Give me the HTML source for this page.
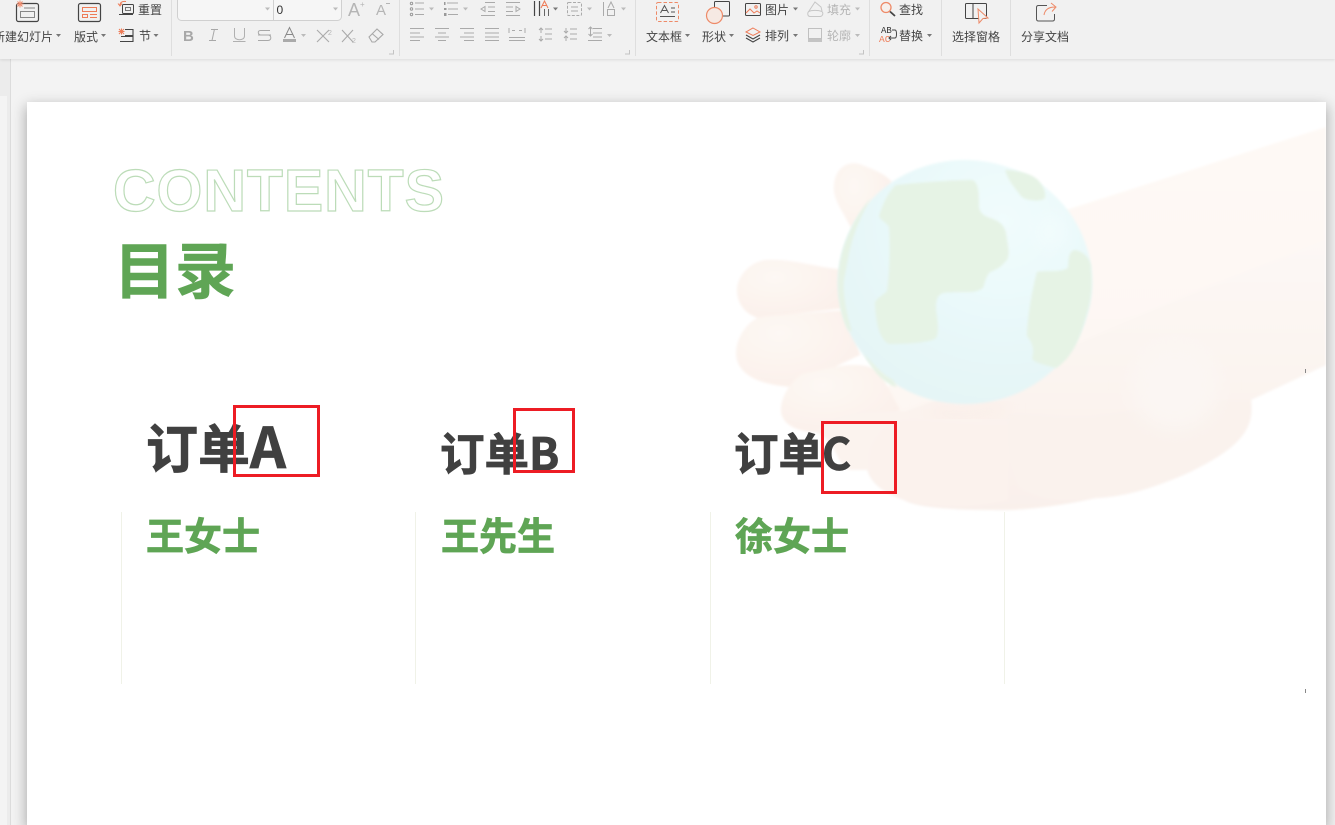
<!DOCTYPE html>
<html lang="zh">
<head>
<meta charset="utf-8">
<style>
html,body{margin:0;padding:0;width:1335px;height:825px;overflow:hidden;background:#f3f3f3;}
body{position:relative;font-family:"Liberation Sans","Noto Sans CJK SC",sans-serif;}
.abs{position:absolute;}
#tb{position:absolute;left:0;top:0;width:1335px;height:59px;background:#f1f1f1;box-shadow:0 1px 3px rgba(0,0,0,.1);z-index:3;}
#tb svg{display:block;}
#tb text{font-family:"Noto Sans CJK SC",sans-serif;font-size:12px;fill:#444;}
#tb text.d{fill:#b5b5b5;}
#slide{position:absolute;left:27px;top:102px;width:1299px;height:723px;background:#fff;box-shadow:0 5px 13px 1px rgba(0,0,0,.3);overflow:hidden;}
.t{position:absolute;font-family:"Noto Sans CJK SC",sans-serif;font-weight:700;white-space:nowrap;}
.dk{color:#404040;-webkit-text-stroke:.8px #404040;}
.gr{color:#5fa555;-webkit-text-stroke:.8px #5fa555;}
.box{position:absolute;border:3px solid #ed1c24;box-sizing:border-box;}
.vl{position:absolute;top:512px;height:172px;width:1px;background:#f0f2e8;}
</style>
</head>
<body>
<div class="abs" style="left:0;top:59px;width:10px;height:766px;background:#ececec;"></div>
<div class="abs" style="left:0;top:96px;width:7px;height:729px;background:#f4f4f4;"></div>
<div class="abs" style="left:10px;top:59px;width:1px;height:766px;background:#dcdcdc;"></div>

<div id="tb">
<svg width="1335" height="59" viewBox="0 0 1335 59" fill="none">
<!-- dividers -->
<g stroke="#dedede"><path d="M171.5 0V56M399.5 0V56M635.5 0V56M869.5 0V56M941.5 0V56M1010.5 0V56"/></g>
<!-- launchers -->
<g stroke="#c4c4c4"><path d="M393.5 50V54H389M629.5 50V54H625M863.5 50V54H859"/></g>
<!-- new slide -->
<rect x="16.5" y="3.5" width="22" height="18" rx="2" stroke="#444" stroke-width="1.2" fill="#f1f1f1"/>
<rect x="20.5" y="11.5" width="14" height="6" stroke="#888"/>
<path d="M24 8H35" stroke="#888"/>
<path d="M20 0.5V7.500M16.500 4H23.500M17.500 1.500L22.500 6.500M22.500 1.500L17.500 6.500" stroke="#f08a6c"/>
<text x="-7" y="41">新建幻灯片</text>
<!-- layout -->
<rect x="78.5" y="3.5" width="22" height="18" rx="2" stroke="#444" stroke-width="1.2"/>
<path d="M82.5 7.5H96.5V11.5H82.5ZM82.5 14.5H87.5V17.5H82.5ZM90 14.5H97M90 17.5H97" stroke="#ee7b57"/>
<text x="74" y="41">版式</text>
<!-- reset -->
<rect x="122.5" y="4.5" width="11" height="9" rx="1" stroke="#444"/>
<rect x="125.5" y="7.5" width="5" height="3" stroke="#777"/>
<path d="M119 14.5H133" stroke="#444"/>
<path d="M126 1.5C122 1 120 2.5 120 5.5M118 3.5L120 6L122 3.5" stroke="#ee7b57"/>
<text x="138" y="14">重置</text>
<!-- section -->
<path d="M125 29.5H133V35.5H125M121 36.5H133V41.5H120" stroke="#444" stroke-width="1.1"/>
<path d="M121.500 28.500V34.500M118.500 31.500H124.500M119 29L124 34M124 29L119 34" stroke="#ee7b57"/>
<text x="139" y="40">节</text>
<!-- font combos -->
<rect x="177.500" y="-6.500" width="164" height="27" rx="4" fill="#f6f6f6" stroke="#d0d0d0"/>
<path d="M273.500 -1V20" stroke="#d0d0d0"/>
<text x="276.500" y="14" style="font-size:12px;fill:#333;font-family:'Liberation Sans',sans-serif">0</text>
<!-- A+ A- -->
<text x="348" y="16" class="d" style="font-size:18px;font-family:'Liberation Sans',sans-serif">A</text>
<text x="360" y="7" class="d" style="font-size:8px;font-family:'Liberation Sans',sans-serif">+</text>
<text x="376" y="15" class="d" style="font-size:15px;font-family:'Liberation Sans',sans-serif">A</text>
<path d="M386 3.500H390" stroke="#b5b5b5"/>
<!-- B I U S -->
<text x="183" y="41" style="font-size:15px;font-weight:700;fill:#a8a8a8;font-family:'Liberation Sans',sans-serif">B</text>
<path d="M214.500 29L212 40.500M211 29.500H218M209 40.500H216" stroke="#a8a8a8"/>
<path d="M234.500 28V36C234.500 41 244.500 41 244.500 36V28M233 41.500H245.500" stroke="#b0b0b0"/>
<path d="M270 30.500H260.500C257 30.500 258 35 261 35H268C271.500 35 272 40.500 268 40.500H258M258 35H271" stroke="#a8a8a8"/>
<path d="M284.500 38L289.500 27.500L294.500 38M286 34.500H293" stroke="#888"/>
<rect x="283" y="39" width="13" height="3" fill="#aaa"/>
<path d="M317 30L329 42M329 30L317 42M342 30L353 42M353 30L342 42" stroke="#aaa" stroke-width="1.100"/>
<text x="328" y="35" class="d" style="font-size:7px;font-family:'Liberation Sans',sans-serif">2</text>
<text x="352" y="43" class="d" style="font-size:7px;font-family:'Liberation Sans',sans-serif">2</text>
<path d="M369 37L377 29L383 34.500L375 42H372ZM372 33.500L379 39.500" stroke="#a8a8a8" stroke-width="1.100"/>
<!-- lists -->
<g stroke="#aaa">
<path d="M415 3H424M415 9H424M415 14.500H424M447 3H458M448 9H458M448 14.500H458"/>
<path d="M485 2.500H495M488 7H495M488 11.500H495M481 15.500H495M481 9L485 6.500V11.500Z"/>
<path d="M506 2.500H520M506 7H513M506 11.500H513M506 15.500H520M520 9L516 6.500V11.500Z"/>
<rect x="567.500" y="2.500" width="14" height="13" rx="1" stroke-dasharray="3 1.500"/>
<path d="M571 7H578M571 11H578"/>
<path d="M603.500 2V16"/><rect x="607.500" y="9.500" width="7" height="6"/>
<path d="M608 8L611 2L614 8"/>
</g>
<g stroke="#999" fill="none"><circle cx="411.500" cy="3.500" r="1.200"/><circle cx="411.500" cy="9" r="1.200"/><circle cx="411.500" cy="14.500" r="1.200"/></g>
<g fill="#999"><rect x="444" y="2" width="1.500" height="3"/><rect x="444" y="8" width="2.500" height="2"/><rect x="444" y="13" width="2.500" height="3"/></g>
<path d="M534.500 1V16M539.500 1V16" stroke="#444" stroke-width="1.200"/>
<path d="M544.500 9V16M548.500 9V16" stroke="#666"/>
<path d="M541 8L544.500 1L548 8M542 5.500H547" stroke="#ee7b57"/>
<!-- align row -->
<g stroke="#aaa">
<path d="M410 28.500H424M410 33H420M410 37H424M410 40.500H420"/>
<path d="M435 28.500H449M438 33H446M435 37H449M438 40.500H446"/>
<path d="M460 28.500H474M464 33H474M460 37H474M464 40.500H474"/>
<path d="M485 28.500H499M485 33H499M485 37H499M485 40.500H499"/>
<path d="M509 28V33M525 28V33M509 37.500H525M509 40.500H525M512 30.500H515M519 30.500H522"/>
<path d="M545 29H552M545 34H552M545 39H552M541 28V33M541 36V41M539 30L541 28L543 30M539 39L541 41L543 39"/>
<path d="M570 29H577M570 34H577M570 39H577M566 28V33M566 36V41M564 31L566 33L568 31M564 38L566 36L568 38"/>
<path d="M593 28.500H602M593 33H602M593 37H602M588 40.500H602M590.500 27V36M588.500 29L590.500 27L592.500 29M588.500 34L590.500 36L592.500 34"/>
</g>
<!-- text box -->
<rect x="656.500" y="2.500" width="22" height="19" rx="1.500" stroke="#ee8a68" stroke-dasharray="3.500 2"/>
<path d="M660.500 13L664.500 5.500L668.500 13M662 10.500H667M660 16.500H675M671 8H675M671 12H675" stroke="#555"/>
<text x="646" y="41">文本框</text>
<!-- shapes -->
<rect x="714.500" y="1.500" width="15" height="14.500" rx="1" stroke="#444"/>
<circle cx="714.500" cy="15.500" r="8" fill="#f6e9e3" stroke="#ee8a68" stroke-width="1.200"/>
<text x="702" y="41">形状</text>
<!-- picture -->
<rect x="745.500" y="3.500" width="15" height="12" rx="1" stroke="#444"/>
<path d="M746 13L750 9L754 13L757 11L760 13" stroke="#ee7b57"/>
<circle cx="756" cy="7" r="1.200" stroke="#ee7b57"/>
<text x="765" y="14">图片</text>
<!-- fill -->
<path d="M809 11L815 2L821 7L822 11M808.500 11.500C812 10 818 10 822 11.500C824 14 822 16.500 820 16.500H810C808 16.500 807 14 808.500 11.500Z" stroke="#c6c6c6"/>
<text x="827" y="14" class="d">填充</text>
<!-- arrange -->
<path d="M753 28L760 32L753 35.500L746 32Z" stroke="#ee7b57"/>
<path d="M746 35L753 39L760 35M746 38L753 42L760 38" stroke="#444" stroke-width="1.100"/>
<text x="765" y="40">排列</text>
<!-- outline -->
<rect x="808.500" y="28.500" width="13" height="10" stroke="#c0c0c0"/>
<rect x="808" y="39" width="14" height="3" fill="#c4c4c4"/>
<text x="827" y="40" class="d">轮廓</text>
<!-- search -->
<circle cx="886" cy="7.500" r="5" stroke="#ee8a68" stroke-width="1.300" fill="#f6f0ec"/>
<path d="M890 11.500L895 16" stroke="#444" stroke-width="1.800"/>
<text x="899" y="14">查找</text>
<!-- replace -->
<text x="881" y="33" style="font-size:9px;fill:#333;font-family:'Liberation Mono',monospace">AB</text>
<text x="879" y="42" style="font-size:9.500px;fill:#ee7b57;font-family:'Liberation Mono',monospace">AC</text>
<path d="M892 30H895C897 30 897 38 895 38H889M891 36L889 38L891 40" stroke="#444"/>
<text x="899" y="40">替换</text>
<!-- selection pane -->
<rect x="965.500" y="3.500" width="21" height="15" rx="1" stroke="#444"/>
<path d="M973 3.500V18.500" stroke="#444"/>
<path d="M978 9L988 18L983 18.500L979 23Z" fill="#f1f1f1" stroke="#ee8a68"/>
<text x="952" y="41">选择窗格</text>
<!-- share -->
<path d="M1047 5.500H1038.500C1037 5.500 1036.500 6 1036.500 7.500V19C1036.500 20.500 1037 21 1038.500 21H1052.500C1054 21 1054.500 20.500 1054.500 19V14" stroke="#555"/>
<path d="M1044 15C1045 9 1049 7 1055 7M1051 3L1056 7L1052 11.500" stroke="#ee8a68"/>
<text x="1021" y="41">分享文档</text>
<!-- dropdown arrows -->
<g fill="#777">
<path d="M56 34H61L58.500 37ZM101 34H106L103.500 37ZM153.500 34H158.500L156 37ZM553 7.500H558L555.500 10.500ZM685 34H690L687.500 37ZM729 34H734L731.500 37ZM793 7.500H798L795.500 10.500ZM793 34H798L795.500 37ZM927 34H932L929.500 37Z"/>
</g>
<g fill="#bbb">
<path d="M265 7.500H270L267.500 10.500ZM333 7.500H338L335.500 10.500ZM301 34H306L303.500 37ZM429 7.500H434L431.500 10.500ZM463 7.500H468L465.500 10.500ZM587 7.500H592L589.500 10.500ZM621 7.500H626L623.500 10.500ZM607 34H612L609.500 37ZM855 7.500H860L857.500 10.500ZM855 34H860L857.500 37Z"/>
</g>
</svg>
</div>

<div id="slide">
<svg class="abs" style="left:-27px;top:-102px" width="1335" height="825" viewBox="0 0 1335 825">
<defs>
<filter id="b1" x="-30%" y="-30%" width="160%" height="160%"><feGaussianBlur stdDeviation="9"/></filter>
<filter id="b0" x="-5%" y="-5%" width="110%" height="110%"><feGaussianBlur stdDeviation="1.200"/></filter>
<linearGradient id="arm" x1="0" y1="0" x2="0" y2="1"><stop offset="0" stop-color="#fef9f5"/><stop offset="1" stop-color="#fdf6f2"/></linearGradient>
<linearGradient id="palm" x1="0" y1="0" x2="0" y2="1"><stop offset="0" stop-color="#fdf8f5"/><stop offset="1" stop-color="#f9f0eb"/></linearGradient>
<radialGradient id="f1" cx=".35" cy=".3" r=".85"><stop offset="0" stop-color="#fdf8f4"/><stop offset="1" stop-color="#fbefe9"/></radialGradient>
<radialGradient id="gl" cx=".65" cy=".25" r=".85"><stop offset="0" stop-color="#f1fcfd"/><stop offset=".55" stop-color="#e8f8f9"/><stop offset="1" stop-color="#e4f4f5"/></radialGradient>
<clipPath id="cl"><rect x="27" y="102" width="1299" height="723"/></clipPath>
</defs>
<g clip-path="url(#cl)">
<g filter="url(#b0)">
<path d="M1060 212L1326 127V365L1251 400C1254 425 1246 445 1190 472C1150 490 1120 497 1096 498C1060 506 1020 511 994 510C950 510 915 507 904 500C880 492 869 480 867 468L850 467L870 400L1000 300Z" fill="url(#arm)"/>
<path d="M1008 375C1060 350 1150 310 1326 240V365L1251 400C1254 425 1246 445 1190 472C1150 490 1120 497 1096 498C1060 506 1020 511 994 510C950 510 915 507 904 500C880 492 869 480 867 468L880 420Z" fill="url(#palm)"/>
<path d="M850 226C842 210 832 198 834 184C836 166 850 160 862 165C875 170 885 174 892 182L870 240Z" fill="url(#f1)"/>
<path d="M845 270C820 268 790 258 765 260C748 263 736 278 737 292C738 305 746 314 758 318L845 308Z" fill="url(#f1)"/>
<path d="M760 317C750 320 736 335 736 354C737 375 760 385 792 387L860 355L848 310C820 312 790 314 760 317Z" fill="url(#f1)"/>
<path d="M802 374C790 382 780 398 781 412C783 426 800 432 815 432L900 410L880 372C860 358 830 368 802 374Z" fill="url(#f1)"/>
<path d="M815 432C850 405 900 410 960 415L990 425L960 470H850C835 465 838 440 815 432Z" fill="#fbf3ee"/>
<path d="M905 420C925 418 960 425 1010 424L1008 500C970 510 930 507 904 500C880 492 869 480 869 460C869 440 885 422 905 420Z" fill="#fbf2ed"/>
<path d="M1010 414C1030 412 1050 418 1090 417L1200 400L1251 400C1254 425 1246 445 1190 472C1150 490 1120 497 1096 498C1060 503 1040 500 1020 488C1008 470 1004 430 1010 414Z" fill="#faf2ed"/>
</g>
<ellipse cx="1175" cy="385" rx="45" ry="45" fill="#fbf6f3" filter="url(#b1)"/>
<path d="M930 410C960 420 985 415 1005 405" stroke="#faede7" stroke-width="10" fill="none" filter="url(#b1)"/>
<!-- globe -->
<ellipse cx="965" cy="282" rx="127" ry="122" fill="url(#gl)" filter="url(#b0)"/>
<g fill="#e6f3e5" filter="url(#b0)">
<path d="M896 185C925 182 955 180 972 180C978 182 979 190 979 207C980 214 985 216 990 218C1003 222 1006 228 1007 240C1009 250 1010 258 1005 262C1000 268 995 270 990 272C986 276 985 282 983 288C978 291 975 292 970 292C960 292 950 292 943 293C937 295 936 300 936 310C938 322 939 332 936 338C932 342 910 344 889 344C880 340 876 325 875 303C876 298 884 295 887 291C890 270 890 240 889 227C886 222 880 220 879 216C883 204 888 192 896 185Z"/>
<path d="M1005 170C1012 170 1030 172 1038 180C1042 185 1046 190 1045 198C1042 202 1025 201 1021 196C1015 188 1009 182 1005 170Z"/>
<path d="M1037 272C1045 270 1060 273 1068 268C1069 260 1068 251 1075 250C1085 252 1092 260 1091 270C1093 290 1090 305 1085 320C1080 338 1072 358 1056 368C1045 365 1032 362 1032 358C1035 350 1032 342 1027 336C1027 320 1032 290 1037 272Z"/>
<path d="M871 198C860 210 845 235 840 262C836 285 838 310 848 330L852 332C844 305 842 285 845 275C849 255 850 235 871 198Z"/>
<path d="M864 354C872 370 885 385 897 387L893 380C880 373 872 362 864 354Z"/>
</g>
<ellipse cx="1050" cy="232" rx="14" ry="16" fill="#f2fcfd" filter="url(#b1)"/>
</g>
</svg>
</div>

<svg class="abs" style="left:0;top:0;z-index:2" width="1335" height="825" viewBox="0 0 1335 825">
<text x="113" y="211" textLength="331" lengthAdjust="spacing" style="font-family:'Liberation Sans',sans-serif;font-size:59px;font-weight:700" fill="#fff" stroke="#bcdcb8" stroke-width="1.200">CONTENTS</text>
<path d="M1305.500 369V373M1305.500 689V693" stroke="#888" stroke-width="1"/>
</svg>

<div style="position:absolute;left:0;top:0;width:1335px;height:825px;z-index:4;">
<div class="vl" style="left:121px"></div>
<div class="vl" style="left:415px"></div>
<div class="vl" style="left:710px"></div>
<div class="vl" style="left:1004px"></div>

<div class="t gr" style="left:114px;top:232px;font-size:61px;line-height:70px;-webkit-text-stroke-width:.6px;">目录</div>

<div class="t dk" style="left:146px;top:415px;font-size:52px;line-height:60px;">订单<span style="font-size:56px;">A</span></div>
<div class="t dk" style="left:440px;top:424px;font-size:44.500px;line-height:54px;">订单B</div>
<div class="t dk" style="left:734px;top:424px;font-size:44.500px;line-height:54px;">订单<span style="margin-left:-1px">C</span></div>

<div class="t gr" style="left:146px;top:510px;font-size:38px;line-height:48px;">王女士</div>
<div class="t gr" style="left:441px;top:510px;font-size:38px;line-height:48px;">王先生</div>
<div class="t gr" style="left:735px;top:510px;font-size:38px;line-height:48px;">徐女士</div>

<div class="box" style="left:233px;top:405px;width:87px;height:72px;"></div>
<div class="box" style="left:513px;top:408px;width:62px;height:65px;"></div>
<div class="box" style="left:821px;top:421px;width:76px;height:73px;"></div>
</div>
</body>
</html>
